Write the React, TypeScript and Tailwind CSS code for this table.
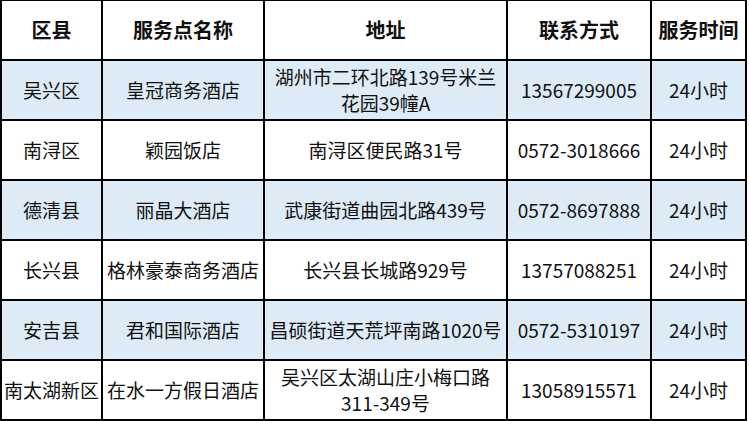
import React from "react";

type Row = {
  district: string;
  name: string;
  address: React.ReactNode;
  phone: string;
  hours: string;
};

const rows: Row[] = [
  {
    district: "吴兴区",
    name: "皇冠商务酒店",
    address: (
      <>
        湖州市二环北路139号米兰
        <br />
        花园39幢A
      </>
    ),
    phone: "13567299005",
    hours: "24小时",
  },
  { district: "南浔区", name: "颖园饭店", address: "南浔区便民路31号", phone: "0572-3018666", hours: "24小时" },
  { district: "德清县", name: "丽晶大酒店", address: "武康街道曲园北路439号", phone: "0572-8697888", hours: "24小时" },
  { district: "长兴县", name: "格林豪泰商务酒店", address: "长兴县长城路929号", phone: "13757088251", hours: "24小时" },
  { district: "安吉县", name: "君和国际酒店", address: "昌硕街道天荒坪南路1020号", phone: "0572-5310197", hours: "24小时" },
  {
    district: "南太湖新区",
    name: "在水一方假日酒店",
    address: (
      <>
        吴兴区太湖山庄小梅口路
        <br />
        311-349号
      </>
    ),
    phone: "13058915571",
    hours: "24小时",
  },
];

const headers = ["区县", "服务点名称", "地址", "联系方式", "服务时间"];

function Cell({ children, bold, blue }: { children: React.ReactNode; bold?: boolean; blue?: boolean }) {
  return (
    <div
      className={`h-[60px] border-r-2 border-b-2 border-black flex items-center justify-center text-center whitespace-nowrap leading-[26px] ${
        bold ? "font-bold text-[20px]" : "text-[19px]"
      } ${blue ? "bg-[#ddebf7]" : "bg-white"}`}
    >
      <div>{children}</div>
    </div>
  );
}

export default function App() {
  return (
    <div className="w-[749px] h-[421px] overflow-hidden bg-white font-['Noto_Sans_CJK_SC','Noto_Sans',sans-serif] text-[#111]">
      <div className="grid grid-cols-[101px_162px_243px_144px_95px] border-l-2 border-t-2 border-black w-[747px] -mt-[1px]">
        {headers.map((h) => (
          <Cell key={h} bold>
            {h}
          </Cell>
        ))}
        {rows.map((r, i) => {
          const blue = i % 2 === 0;
          return (
            <React.Fragment key={i}>
              <Cell blue={blue}>{r.district}</Cell>
              <Cell blue={blue}>{r.name}</Cell>
              <Cell blue={blue}>{r.address}</Cell>
              <Cell blue={blue}>{r.phone}</Cell>
              <Cell blue={blue}>{r.hours}</Cell>
            </React.Fragment>
          );
        })}
      </div>
    </div>
  );
}
